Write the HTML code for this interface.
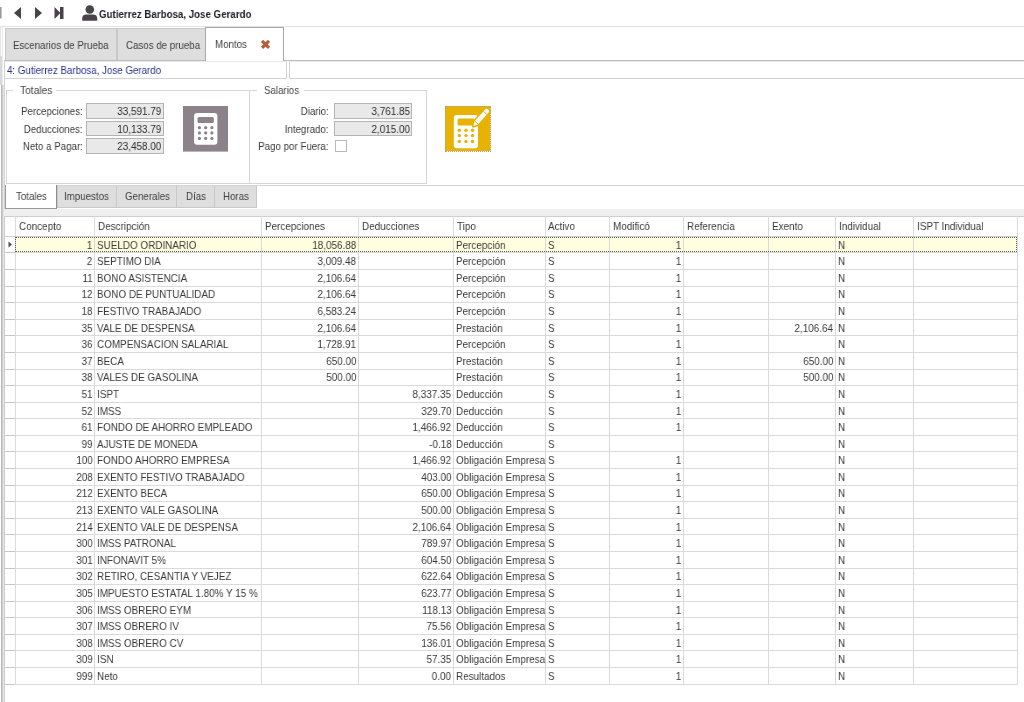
<!DOCTYPE html><html><head><meta charset="utf-8"><title>Montos</title><style>
*{margin:0;padding:0;box-sizing:border-box}
html,body{width:1024px;height:702px;overflow:hidden;background:#fff}
body{position:relative;font-family:"Liberation Sans",sans-serif;font-size:11px;color:#3a3a3a}
.a{position:absolute}
.t{position:absolute;white-space:nowrap;line-height:1;will-change:transform}
.hl{position:absolute;height:1px}
.vl{position:absolute;width:1px}
.g{color:#3b3b3b}
</style></head><body>
<svg class="a" style="left:0;top:0" width="80" height="26" viewBox="0 0 80 26">
<rect x="0" y="7" width="1.6" height="11.5" fill="#9a9a9a"/>
<polygon points="21,7 21,19 14,13" fill="#48434a"/>
<polygon points="35,7 35,19 42,13" fill="#48434a"/>
<polygon points="54.5,7 54.5,19 60.5,13" fill="#48434a"/>
<rect x="60" y="7" width="3.5" height="12" fill="#48434a"/>
<circle cx="89.8" cy="9.6" r="4.3" fill="#48434a"/>
</svg>
<svg class="a" style="left:80px;top:0" width="20" height="26" viewBox="80 0 20 26">
<circle cx="89.8" cy="9.5" r="4.3" fill="#48434a"/>
<path d="M82.2 20.8 L82.2 18.5 Q82.2 14.6 86.5 14.6 L93 14.6 Q97.2 14.6 97.2 18.5 L97.2 20.8 Z" fill="#48434a"/>
</svg>
<div class="t" style="left:99.30px;top:8.69px;font-size:11px;transform:scaleX(0.884);transform-origin:0 0;font-weight:bold;color:#1e1e2a">Gutierrez Barbosa, Jose Gerardo</div>
<div class="hl" style="left:0px;top:25.5px;width:1024px;height:1px;background:#e2e2e2"></div>
<div class="vl" style="left:0px;top:26px;height:30px;width:1px;background:#e4e4e4"></div>
<div class="vl" style="left:2px;top:26px;height:30px;width:1px;background:#e6e6e6"></div>
<div class="vl" style="left:0px;top:56px;height:29px;width:1px;background:#d8d8d8"></div>
<div class="vl" style="left:1px;top:56px;height:29px;width:1px;background:#dadada"></div>
<div class="vl" style="left:2px;top:56px;height:29px;width:1px;background:#ececec"></div>
<div class="vl" style="left:1px;top:85px;height:617px;width:1px;background:#b9b9b9"></div>
<div class="vl" style="left:2px;top:85px;height:617px;width:1px;background:#cdcdcd"></div>
<div class="vl" style="left:3px;top:85px;height:617px;width:1px;background:#e4e4e4"></div>
<div class="hl" style="left:4px;top:59.5px;width:1020px;height:1px;background:#bdbdbd"></div>
<div class="a" style="left:5px;top:28px;width:112px;height:32px;background:#dedede;border:1px solid #c8c8c8;border-bottom:none;"></div>
<div class="t" style="left:13.00px;top:39.79px;font-size:11px;transform:scaleX(0.884);transform-origin:0 0;color:#404040">Escenarios de Prueba</div>
<div class="a" style="left:117px;top:28px;width:89px;height:32px;background:#dedede;border:1px solid #c8c8c8;border-bottom:none;"></div>
<div class="t" style="left:125.50px;top:39.79px;font-size:11px;transform:scaleX(0.884);transform-origin:0 0;color:#404040">Casos de prueba</div>
<div class="a" style="left:205px;top:26.5px;width:79px;height:34px;background:#fff;border:1px solid #a9a9a9;border-bottom:none;"></div>
<div class="t" style="left:215.40px;top:38.89px;font-size:11px;transform:scaleX(0.884);transform-origin:0 0;color:#404040">Montos</div>
<svg class="a" style="left:260px;top:39px" width="12" height="11" viewBox="0 0 12 11">
<path d="M2 1.9 L9 8.9 M9 1.9 L2 8.9" stroke="#b95c3b" stroke-width="3.1" stroke-linecap="butt"/></svg>
<div class="a" style="left:4px;top:61px;width:283px;height:18px;background:#fff;border:1px solid #d2d2d2;border-top-color:#e8e8e8"></div>
<div class="t" style="left:7.00px;top:64.69px;font-size:11px;transform:scaleX(0.884);transform-origin:0 0;color:#283190">4: Gutierrez Barbosa, Jose Gerardo</div>
<div class="a" style="left:288.5px;top:61px;width:740px;height:18px;background:#fff;border:1px solid #d2d2d2;border-top-color:#e8e8e8;border-right:none"></div>
<div class="vl" style="left:4px;top:79px;height:623px;width:1px;background:#d4d4d4"></div>
<div class="hl" style="left:6px;top:90px;width:7px;height:1px;background:#d6d6d6"></div>
<div class="hl" style="left:56px;top:90px;width:193px;height:1px;background:#d6d6d6"></div>
<div class="vl" style="left:6px;top:90px;height:93px;width:1px;background:#d6d6d6"></div>
<div class="vl" style="left:249px;top:90px;height:94px;width:1px;background:#d6d6d6"></div>
<div class="hl" style="left:6px;top:183px;width:244px;height:1px;background:#d6d6d6"></div>
<div class="t" style="left:20.00px;top:84.89px;font-size:11px;transform:scaleX(0.93);transform-origin:0 0;color:#454545">Totales</div>
<div class="hl" style="left:249px;top:90px;width:8px;height:1px;background:#d6d6d6"></div>
<div class="hl" style="left:304px;top:90px;width:123px;height:1px;background:#d6d6d6"></div>
<div class="vl" style="left:426px;top:90px;height:94px;width:1px;background:#d6d6d6"></div>
<div class="hl" style="left:250px;top:183px;width:177px;height:1px;background:#d6d6d6"></div>
<div class="t" style="left:263.80px;top:84.89px;font-size:11px;transform:scaleX(0.884);transform-origin:0 0;color:#454545">Salarios</div>
<div class="t" style="right:941.40px;top:105.79px;font-size:11px;transform:scaleX(0.884);transform-origin:100% 0;color:#3a3a3a">Percepciones:</div>
<div class="t" style="right:941.40px;top:123.59px;font-size:11px;transform:scaleX(0.884);transform-origin:100% 0;color:#3a3a3a">Deducciones:</div>
<div class="t" style="right:941.40px;top:140.89px;font-size:11px;transform:scaleX(0.884);transform-origin:100% 0;color:#3a3a3a">Neto a Pagar:</div>
<div class="a" style="left:86px;top:103.3px;width:78px;height:15.4px;background:#e9e9e9;border:1px solid #b4b4b4;"></div>
<div class="t" style="right:862.50px;top:106.33px;font-size:11.3px;transform:scaleX(0.8761061946902655);transform-origin:100% 0;color:#2e2e2e">33,591.79</div>
<div class="a" style="left:86px;top:121px;width:78px;height:15.4px;background:#e9e9e9;border:1px solid #b4b4b4;"></div>
<div class="t" style="right:862.50px;top:124.03px;font-size:11.3px;transform:scaleX(0.8761061946902655);transform-origin:100% 0;color:#2e2e2e">10,133.79</div>
<div class="a" style="left:86px;top:138.4px;width:78px;height:15.4px;background:#e9e9e9;border:1px solid #b4b4b4;"></div>
<div class="t" style="right:862.50px;top:141.43px;font-size:11.3px;transform:scaleX(0.8761061946902655);transform-origin:100% 0;color:#2e2e2e">23,458.00</div>
<div class="t" style="right:695.70px;top:105.99px;font-size:11px;transform:scaleX(0.884);transform-origin:100% 0;color:#3a3a3a">Diario:</div>
<div class="t" style="right:695.70px;top:123.59px;font-size:11px;transform:scaleX(0.884);transform-origin:100% 0;color:#3a3a3a">Integrado:</div>
<div class="t" style="right:695.70px;top:141.19px;font-size:11px;transform:scaleX(0.884);transform-origin:100% 0;color:#3a3a3a">Pago por Fuera:</div>
<div class="a" style="left:333.8px;top:103.2px;width:78.2px;height:15.6px;background:#e9e9e9;border:1px solid #b4b4b4;"></div>
<div class="t" style="right:614.50px;top:106.23px;font-size:11.3px;transform:scaleX(0.8761061946902655);transform-origin:100% 0;color:#2e2e2e">3,761.85</div>
<div class="a" style="left:333.8px;top:121px;width:78.2px;height:15.4px;background:#e9e9e9;border:1px solid #b4b4b4;"></div>
<div class="t" style="right:614.50px;top:124.03px;font-size:11.3px;transform:scaleX(0.8761061946902655);transform-origin:100% 0;color:#2e2e2e">2,015.00</div>
<div class="a" style="left:334.7px;top:140.2px;width:12px;height:12px;background:#fff;border:1px solid #b8b8b8;"></div>
<svg class="a" style="left:182.8px;top:106px" width="45.5" height="45.6" viewBox="0 0 45.5 45.6">
<rect x="0" y="0" width="45.5" height="45.6" fill="#8c828a"/>
<rect x="11.1" y="6.9" width="23.3" height="31.8" rx="3" fill="#fff"/>
<rect x="14.5" y="11" width="16.3" height="5.9" rx="1.5" fill="#8c828a"/>
<g fill="#8c828a">
<circle cx="16.4" cy="21.7" r="1.6"/><circle cx="22.7" cy="21.7" r="1.6"/><circle cx="28.9" cy="21.7" r="1.6"/>
<circle cx="16.4" cy="26.9" r="1.6"/><circle cx="22.7" cy="26.9" r="1.6"/><circle cx="28.9" cy="26.9" r="1.6"/>
<circle cx="16.4" cy="32.4" r="1.6"/><circle cx="22.7" cy="32.4" r="1.6"/><circle cx="28.9" cy="32.4" r="1.6"/>
</g></svg>
<svg class="a" style="left:445.3px;top:106.2px" width="45.6" height="45.2" viewBox="0 0 45.6 45.2">
<rect x="0" y="0" width="45.6" height="45.2" fill="#e8b200"/>
<rect x="8.8" y="8.9" width="24.2" height="33.3" rx="3" fill="#fff"/>
<rect x="12.5" y="12.6" width="17" height="6.8" rx="1.5" fill="#e8b200"/>
<g fill="#e8b200">
<circle cx="14.3" cy="24.2" r="1.7"/><circle cx="21" cy="24.2" r="1.7"/><circle cx="27.5" cy="24.2" r="1.7"/>
<circle cx="14.3" cy="29.6" r="1.7"/><circle cx="21" cy="29.6" r="1.7"/><circle cx="27.5" cy="29.6" r="1.7"/>
<circle cx="14.3" cy="35.4" r="1.7"/><circle cx="21" cy="35.4" r="1.7"/><circle cx="27.5" cy="35.4" r="1.7"/>
</g>
<g transform="translate(28.4 20) rotate(-48)">
<path d="M0 0 L4 -2.3 L20 -2.3 Q22.2 -2.3 22.2 0 Q22.2 2.3 20 2.3 L4 2.3 Z" fill="#e8b200" stroke="#e8b200" stroke-width="3.2" stroke-linejoin="round"/>
<path d="M0 0 L4 -2.3 L20 -2.3 Q22.2 -2.3 22.2 0 Q22.2 2.3 20 2.3 L4 2.3 Z" fill="#fff"/>
<path d="M4.6 -2.6 L4.6 2.6 M17.6 -2.6 L17.6 2.6" stroke="#e8b200" stroke-width="0.9"/>
</g>
</svg>
<div class="a" style="left:445px;top:106px;width:46px;height:45.6px;border:1px dotted #a4a4a4"></div>
<div class="hl" style="left:4px;top:184.8px;width:1020px;height:1px;background:#d4d4d4"></div>
<div class="a" style="left:4px;top:209px;width:1020px;height:6.5px;background:#efefef;"></div>
<div class="a" style="left:57px;top:186px;width:60px;height:22px;background:#dedede;border:1px solid #c8c8c8;border-top:none"></div>
<div class="t" style="left:64.00px;top:190.59px;font-size:11px;transform:scaleX(0.884);transform-origin:0 0;color:#404040">Impuestos</div>
<div class="a" style="left:116px;top:186px;width:61px;height:22px;background:#dedede;border:1px solid #c8c8c8;border-top:none"></div>
<div class="t" style="left:124.80px;top:190.59px;font-size:11px;transform:scaleX(0.884);transform-origin:0 0;color:#404040">Generales</div>
<div class="a" style="left:176px;top:186px;width:39px;height:22px;background:#dedede;border:1px solid #c8c8c8;border-top:none"></div>
<div class="t" style="left:185.80px;top:190.59px;font-size:11px;transform:scaleX(0.884);transform-origin:0 0;color:#404040">Días</div>
<div class="a" style="left:214px;top:186px;width:43px;height:22px;background:#dedede;border:1px solid #c8c8c8;border-top:none"></div>
<div class="t" style="left:223.20px;top:190.59px;font-size:11px;transform:scaleX(0.884);transform-origin:0 0;color:#404040">Horas</div>
<div class="a" style="left:5px;top:185.3px;width:52px;height:23.7px;background:#fff;border:1px solid #9a9a9a;border-top:none;border-right:none"></div>
<div class="t" style="left:15.70px;top:191.29px;font-size:11px;transform:scaleX(0.884);transform-origin:0 0;color:#404040">Totales</div>
<div class="vl" style="left:56px;top:185.3px;height:23.7px;width:1px;background:#8e8e8e"></div>
<div class="a" style="left:4px;top:216px;width:1014px;height:19.4px;background:#fff;"></div>
<div class="a" style="left:15.5px;top:236.43px;width:1001.5px;height:15.984px;background:#ffffe0;"></div>
<div class="hl" style="left:4px;top:216px;width:1020px;height:1px;background:#cfcfcf"></div>
<div class="vl" style="left:4px;top:216px;height:468.59799999999996px;width:1px;background:#cfcfcf"></div>
<div class="vl" style="left:15px;top:216px;height:468.59799999999996px;width:1px;background:#dadada"></div>
<div class="vl" style="left:94px;top:216px;height:468.59799999999996px;width:1px;background:#dadada"></div>
<div class="vl" style="left:261px;top:216px;height:468.59799999999996px;width:1px;background:#dadada"></div>
<div class="vl" style="left:358px;top:216px;height:468.59799999999996px;width:1px;background:#dadada"></div>
<div class="vl" style="left:453px;top:216px;height:468.59799999999996px;width:1px;background:#dadada"></div>
<div class="vl" style="left:545px;top:216px;height:468.59799999999996px;width:1px;background:#dadada"></div>
<div class="vl" style="left:609px;top:216px;height:468.59799999999996px;width:1px;background:#dadada"></div>
<div class="vl" style="left:683px;top:216px;height:468.59799999999996px;width:1px;background:#dadada"></div>
<div class="vl" style="left:768px;top:216px;height:468.59799999999996px;width:1px;background:#dadada"></div>
<div class="vl" style="left:835px;top:216px;height:468.59799999999996px;width:1px;background:#dadada"></div>
<div class="vl" style="left:913px;top:216px;height:468.59799999999996px;width:1px;background:#dadada"></div>
<div class="vl" style="left:1017px;top:216px;height:468.59799999999996px;width:1px;background:#dadada"></div>
<div class="hl" style="left:4px;top:235.83px;width:1014px;height:1px;background:#cfcfcf"></div>
<div class="t" style="left:18.80px;top:221.03px;font-size:11.3px;transform:scaleX(0.8761061946902655);transform-origin:0 0;">Concepto</div>
<div class="t" style="left:98.00px;top:221.03px;font-size:11.3px;transform:scaleX(0.8761061946902655);transform-origin:0 0;">Descripción</div>
<div class="t" style="left:265.00px;top:221.03px;font-size:11.3px;transform:scaleX(0.8761061946902655);transform-origin:0 0;">Percepciones</div>
<div class="t" style="left:361.70px;top:221.03px;font-size:11.3px;transform:scaleX(0.8761061946902655);transform-origin:0 0;">Deducciones</div>
<div class="t" style="left:457.20px;top:221.03px;font-size:11.3px;transform:scaleX(0.8761061946902655);transform-origin:0 0;">Tipo</div>
<div class="t" style="left:548.40px;top:221.03px;font-size:11.3px;transform:scaleX(0.8761061946902655);transform-origin:0 0;">Activo</div>
<div class="t" style="left:613.00px;top:221.03px;font-size:11.3px;transform:scaleX(0.8761061946902655);transform-origin:0 0;">Modificó</div>
<div class="t" style="left:687.00px;top:221.03px;font-size:11.3px;transform:scaleX(0.8761061946902655);transform-origin:0 0;">Referencia</div>
<div class="t" style="left:771.60px;top:221.03px;font-size:11.3px;transform:scaleX(0.8761061946902655);transform-origin:0 0;">Exento</div>
<div class="t" style="left:839.00px;top:221.03px;font-size:11.3px;transform:scaleX(0.8761061946902655);transform-origin:0 0;">Individual</div>
<div class="t" style="left:917.40px;top:221.03px;font-size:11.3px;transform:scaleX(0.8761061946902655);transform-origin:0 0;">ISPT Individual</div>
<svg class="a" style="left:8px;top:241.33px" width="5" height="7" viewBox="0 0 5 7"><polygon points="0.5,0.5 4,3.5 0.5,6.5" fill="#505050"/></svg>
<div class="hl" style="left:4px;top:252.41400000000002px;width:1014px;height:1px;background:#dadada"></div>
<div class="hl" style="left:4px;top:252.41400000000002px;width:11px;height:1px;background:#c6c6c6"></div>
<div class="t" style="right:931.60px;top:239.66px;font-size:11.3px;transform:scaleX(0.8761061946902655);transform-origin:100% 0;">1</div>
<div class="t" style="left:97.40px;top:239.66px;font-size:11.3px;transform:scaleX(0.8761061946902655);transform-origin:0 0;">SUELDO ORDINARIO</div>
<div class="t" style="right:667.60px;top:239.66px;font-size:11.3px;transform:scaleX(0.8761061946902655);transform-origin:100% 0;">18,056.88</div>
<div class="t" style="left:456.40px;top:239.66px;font-size:11.3px;transform:scaleX(0.8761061946902655);transform-origin:0 0;">Percepción</div>
<div class="t" style="left:548.40px;top:239.66px;font-size:11.3px;transform:scaleX(0.8761061946902655);transform-origin:0 0;">S</div>
<div class="t" style="right:342.60px;top:239.66px;font-size:11.3px;transform:scaleX(0.8761061946902655);transform-origin:100% 0;">1</div>
<div class="t" style="left:838.40px;top:239.66px;font-size:11.3px;transform:scaleX(0.8761061946902655);transform-origin:0 0;">N</div>
<div class="hl" style="left:4px;top:268.998px;width:1014px;height:1px;background:#dadada"></div>
<div class="hl" style="left:4px;top:268.998px;width:11px;height:1px;background:#c6c6c6"></div>
<div class="t" style="right:931.60px;top:256.25px;font-size:11.3px;transform:scaleX(0.8761061946902655);transform-origin:100% 0;">2</div>
<div class="t" style="left:97.40px;top:256.25px;font-size:11.3px;transform:scaleX(0.8761061946902655);transform-origin:0 0;">SEPTIMO DIA</div>
<div class="t" style="right:667.60px;top:256.25px;font-size:11.3px;transform:scaleX(0.8761061946902655);transform-origin:100% 0;">3,009.48</div>
<div class="t" style="left:456.40px;top:256.25px;font-size:11.3px;transform:scaleX(0.8761061946902655);transform-origin:0 0;">Percepción</div>
<div class="t" style="left:548.40px;top:256.25px;font-size:11.3px;transform:scaleX(0.8761061946902655);transform-origin:0 0;">S</div>
<div class="t" style="right:342.60px;top:256.25px;font-size:11.3px;transform:scaleX(0.8761061946902655);transform-origin:100% 0;">1</div>
<div class="t" style="left:838.40px;top:256.25px;font-size:11.3px;transform:scaleX(0.8761061946902655);transform-origin:0 0;">N</div>
<div class="hl" style="left:4px;top:285.582px;width:1014px;height:1px;background:#dadada"></div>
<div class="hl" style="left:4px;top:285.582px;width:11px;height:1px;background:#c6c6c6"></div>
<div class="t" style="right:931.60px;top:272.83px;font-size:11.3px;transform:scaleX(0.8761061946902655);transform-origin:100% 0;">11</div>
<div class="t" style="left:97.40px;top:272.83px;font-size:11.3px;transform:scaleX(0.8761061946902655);transform-origin:0 0;">BONO ASISTENCIA</div>
<div class="t" style="right:667.60px;top:272.83px;font-size:11.3px;transform:scaleX(0.8761061946902655);transform-origin:100% 0;">2,106.64</div>
<div class="t" style="left:456.40px;top:272.83px;font-size:11.3px;transform:scaleX(0.8761061946902655);transform-origin:0 0;">Percepción</div>
<div class="t" style="left:548.40px;top:272.83px;font-size:11.3px;transform:scaleX(0.8761061946902655);transform-origin:0 0;">S</div>
<div class="t" style="right:342.60px;top:272.83px;font-size:11.3px;transform:scaleX(0.8761061946902655);transform-origin:100% 0;">1</div>
<div class="t" style="left:838.40px;top:272.83px;font-size:11.3px;transform:scaleX(0.8761061946902655);transform-origin:0 0;">N</div>
<div class="hl" style="left:4px;top:302.166px;width:1014px;height:1px;background:#dadada"></div>
<div class="hl" style="left:4px;top:302.166px;width:11px;height:1px;background:#c6c6c6"></div>
<div class="t" style="right:931.60px;top:289.42px;font-size:11.3px;transform:scaleX(0.8761061946902655);transform-origin:100% 0;">12</div>
<div class="t" style="left:97.40px;top:289.42px;font-size:11.3px;transform:scaleX(0.8761061946902655);transform-origin:0 0;">BONO DE PUNTUALIDAD</div>
<div class="t" style="right:667.60px;top:289.42px;font-size:11.3px;transform:scaleX(0.8761061946902655);transform-origin:100% 0;">2,106.64</div>
<div class="t" style="left:456.40px;top:289.42px;font-size:11.3px;transform:scaleX(0.8761061946902655);transform-origin:0 0;">Percepción</div>
<div class="t" style="left:548.40px;top:289.42px;font-size:11.3px;transform:scaleX(0.8761061946902655);transform-origin:0 0;">S</div>
<div class="t" style="right:342.60px;top:289.42px;font-size:11.3px;transform:scaleX(0.8761061946902655);transform-origin:100% 0;">1</div>
<div class="t" style="left:838.40px;top:289.42px;font-size:11.3px;transform:scaleX(0.8761061946902655);transform-origin:0 0;">N</div>
<div class="hl" style="left:4px;top:318.75px;width:1014px;height:1px;background:#dadada"></div>
<div class="hl" style="left:4px;top:318.75px;width:11px;height:1px;background:#c6c6c6"></div>
<div class="t" style="right:931.60px;top:306.00px;font-size:11.3px;transform:scaleX(0.8761061946902655);transform-origin:100% 0;">18</div>
<div class="t" style="left:97.40px;top:306.00px;font-size:11.3px;transform:scaleX(0.8761061946902655);transform-origin:0 0;">FESTIVO TRABAJADO</div>
<div class="t" style="right:667.60px;top:306.00px;font-size:11.3px;transform:scaleX(0.8761061946902655);transform-origin:100% 0;">6,583.24</div>
<div class="t" style="left:456.40px;top:306.00px;font-size:11.3px;transform:scaleX(0.8761061946902655);transform-origin:0 0;">Percepción</div>
<div class="t" style="left:548.40px;top:306.00px;font-size:11.3px;transform:scaleX(0.8761061946902655);transform-origin:0 0;">S</div>
<div class="t" style="right:342.60px;top:306.00px;font-size:11.3px;transform:scaleX(0.8761061946902655);transform-origin:100% 0;">1</div>
<div class="t" style="left:838.40px;top:306.00px;font-size:11.3px;transform:scaleX(0.8761061946902655);transform-origin:0 0;">N</div>
<div class="hl" style="left:4px;top:335.334px;width:1014px;height:1px;background:#dadada"></div>
<div class="hl" style="left:4px;top:335.334px;width:11px;height:1px;background:#c6c6c6"></div>
<div class="t" style="right:931.60px;top:322.58px;font-size:11.3px;transform:scaleX(0.8761061946902655);transform-origin:100% 0;">35</div>
<div class="t" style="left:97.40px;top:322.58px;font-size:11.3px;transform:scaleX(0.8761061946902655);transform-origin:0 0;">VALE DE DESPENSA</div>
<div class="t" style="right:667.60px;top:322.58px;font-size:11.3px;transform:scaleX(0.8761061946902655);transform-origin:100% 0;">2,106.64</div>
<div class="t" style="left:456.40px;top:322.58px;font-size:11.3px;transform:scaleX(0.8761061946902655);transform-origin:0 0;">Prestación</div>
<div class="t" style="left:548.40px;top:322.58px;font-size:11.3px;transform:scaleX(0.8761061946902655);transform-origin:0 0;">S</div>
<div class="t" style="right:342.60px;top:322.58px;font-size:11.3px;transform:scaleX(0.8761061946902655);transform-origin:100% 0;">1</div>
<div class="t" style="right:190.60px;top:322.58px;font-size:11.3px;transform:scaleX(0.8761061946902655);transform-origin:100% 0;">2,106.64</div>
<div class="t" style="left:838.40px;top:322.58px;font-size:11.3px;transform:scaleX(0.8761061946902655);transform-origin:0 0;">N</div>
<div class="hl" style="left:4px;top:351.918px;width:1014px;height:1px;background:#dadada"></div>
<div class="hl" style="left:4px;top:351.918px;width:11px;height:1px;background:#c6c6c6"></div>
<div class="t" style="right:931.60px;top:339.17px;font-size:11.3px;transform:scaleX(0.8761061946902655);transform-origin:100% 0;">36</div>
<div class="t" style="left:97.40px;top:339.17px;font-size:11.3px;transform:scaleX(0.8761061946902655);transform-origin:0 0;">COMPENSACION SALARIAL</div>
<div class="t" style="right:667.60px;top:339.17px;font-size:11.3px;transform:scaleX(0.8761061946902655);transform-origin:100% 0;">1,728.91</div>
<div class="t" style="left:456.40px;top:339.17px;font-size:11.3px;transform:scaleX(0.8761061946902655);transform-origin:0 0;">Percepción</div>
<div class="t" style="left:548.40px;top:339.17px;font-size:11.3px;transform:scaleX(0.8761061946902655);transform-origin:0 0;">S</div>
<div class="t" style="right:342.60px;top:339.17px;font-size:11.3px;transform:scaleX(0.8761061946902655);transform-origin:100% 0;">1</div>
<div class="t" style="left:838.40px;top:339.17px;font-size:11.3px;transform:scaleX(0.8761061946902655);transform-origin:0 0;">N</div>
<div class="hl" style="left:4px;top:368.502px;width:1014px;height:1px;background:#dadada"></div>
<div class="hl" style="left:4px;top:368.502px;width:11px;height:1px;background:#c6c6c6"></div>
<div class="t" style="right:931.60px;top:355.75px;font-size:11.3px;transform:scaleX(0.8761061946902655);transform-origin:100% 0;">37</div>
<div class="t" style="left:97.40px;top:355.75px;font-size:11.3px;transform:scaleX(0.8761061946902655);transform-origin:0 0;">BECA</div>
<div class="t" style="right:667.60px;top:355.75px;font-size:11.3px;transform:scaleX(0.8761061946902655);transform-origin:100% 0;">650.00</div>
<div class="t" style="left:456.40px;top:355.75px;font-size:11.3px;transform:scaleX(0.8761061946902655);transform-origin:0 0;">Prestación</div>
<div class="t" style="left:548.40px;top:355.75px;font-size:11.3px;transform:scaleX(0.8761061946902655);transform-origin:0 0;">S</div>
<div class="t" style="right:342.60px;top:355.75px;font-size:11.3px;transform:scaleX(0.8761061946902655);transform-origin:100% 0;">1</div>
<div class="t" style="right:190.60px;top:355.75px;font-size:11.3px;transform:scaleX(0.8761061946902655);transform-origin:100% 0;">650.00</div>
<div class="t" style="left:838.40px;top:355.75px;font-size:11.3px;transform:scaleX(0.8761061946902655);transform-origin:0 0;">N</div>
<div class="hl" style="left:4px;top:385.086px;width:1014px;height:1px;background:#dadada"></div>
<div class="hl" style="left:4px;top:385.086px;width:11px;height:1px;background:#c6c6c6"></div>
<div class="t" style="right:931.60px;top:372.34px;font-size:11.3px;transform:scaleX(0.8761061946902655);transform-origin:100% 0;">38</div>
<div class="t" style="left:97.40px;top:372.34px;font-size:11.3px;transform:scaleX(0.8761061946902655);transform-origin:0 0;">VALES DE GASOLINA</div>
<div class="t" style="right:667.60px;top:372.34px;font-size:11.3px;transform:scaleX(0.8761061946902655);transform-origin:100% 0;">500.00</div>
<div class="t" style="left:456.40px;top:372.34px;font-size:11.3px;transform:scaleX(0.8761061946902655);transform-origin:0 0;">Prestación</div>
<div class="t" style="left:548.40px;top:372.34px;font-size:11.3px;transform:scaleX(0.8761061946902655);transform-origin:0 0;">S</div>
<div class="t" style="right:342.60px;top:372.34px;font-size:11.3px;transform:scaleX(0.8761061946902655);transform-origin:100% 0;">1</div>
<div class="t" style="right:190.60px;top:372.34px;font-size:11.3px;transform:scaleX(0.8761061946902655);transform-origin:100% 0;">500.00</div>
<div class="t" style="left:838.40px;top:372.34px;font-size:11.3px;transform:scaleX(0.8761061946902655);transform-origin:0 0;">N</div>
<div class="hl" style="left:4px;top:401.67px;width:1014px;height:1px;background:#dadada"></div>
<div class="hl" style="left:4px;top:401.67px;width:11px;height:1px;background:#c6c6c6"></div>
<div class="t" style="right:931.60px;top:388.92px;font-size:11.3px;transform:scaleX(0.8761061946902655);transform-origin:100% 0;">51</div>
<div class="t" style="left:97.40px;top:388.92px;font-size:11.3px;transform:scaleX(0.8761061946902655);transform-origin:0 0;">ISPT</div>
<div class="t" style="right:572.60px;top:388.92px;font-size:11.3px;transform:scaleX(0.8761061946902655);transform-origin:100% 0;">8,337.35</div>
<div class="t" style="left:456.40px;top:388.92px;font-size:11.3px;transform:scaleX(0.8761061946902655);transform-origin:0 0;">Deducción</div>
<div class="t" style="left:548.40px;top:388.92px;font-size:11.3px;transform:scaleX(0.8761061946902655);transform-origin:0 0;">S</div>
<div class="t" style="right:342.60px;top:388.92px;font-size:11.3px;transform:scaleX(0.8761061946902655);transform-origin:100% 0;">1</div>
<div class="t" style="left:838.40px;top:388.92px;font-size:11.3px;transform:scaleX(0.8761061946902655);transform-origin:0 0;">N</div>
<div class="hl" style="left:4px;top:418.254px;width:1014px;height:1px;background:#dadada"></div>
<div class="hl" style="left:4px;top:418.254px;width:11px;height:1px;background:#c6c6c6"></div>
<div class="t" style="right:931.60px;top:405.50px;font-size:11.3px;transform:scaleX(0.8761061946902655);transform-origin:100% 0;">52</div>
<div class="t" style="left:97.40px;top:405.50px;font-size:11.3px;transform:scaleX(0.8761061946902655);transform-origin:0 0;">IMSS</div>
<div class="t" style="right:572.60px;top:405.50px;font-size:11.3px;transform:scaleX(0.8761061946902655);transform-origin:100% 0;">329.70</div>
<div class="t" style="left:456.40px;top:405.50px;font-size:11.3px;transform:scaleX(0.8761061946902655);transform-origin:0 0;">Deducción</div>
<div class="t" style="left:548.40px;top:405.50px;font-size:11.3px;transform:scaleX(0.8761061946902655);transform-origin:0 0;">S</div>
<div class="t" style="right:342.60px;top:405.50px;font-size:11.3px;transform:scaleX(0.8761061946902655);transform-origin:100% 0;">1</div>
<div class="t" style="left:838.40px;top:405.50px;font-size:11.3px;transform:scaleX(0.8761061946902655);transform-origin:0 0;">N</div>
<div class="hl" style="left:4px;top:434.838px;width:1014px;height:1px;background:#dadada"></div>
<div class="hl" style="left:4px;top:434.838px;width:11px;height:1px;background:#c6c6c6"></div>
<div class="t" style="right:931.60px;top:422.09px;font-size:11.3px;transform:scaleX(0.8761061946902655);transform-origin:100% 0;">61</div>
<div class="t" style="left:97.40px;top:422.09px;font-size:11.3px;transform:scaleX(0.8761061946902655);transform-origin:0 0;">FONDO DE AHORRO EMPLEADO</div>
<div class="t" style="right:572.60px;top:422.09px;font-size:11.3px;transform:scaleX(0.8761061946902655);transform-origin:100% 0;">1,466.92</div>
<div class="t" style="left:456.40px;top:422.09px;font-size:11.3px;transform:scaleX(0.8761061946902655);transform-origin:0 0;">Deducción</div>
<div class="t" style="left:548.40px;top:422.09px;font-size:11.3px;transform:scaleX(0.8761061946902655);transform-origin:0 0;">S</div>
<div class="t" style="right:342.60px;top:422.09px;font-size:11.3px;transform:scaleX(0.8761061946902655);transform-origin:100% 0;">1</div>
<div class="t" style="left:838.40px;top:422.09px;font-size:11.3px;transform:scaleX(0.8761061946902655);transform-origin:0 0;">N</div>
<div class="hl" style="left:4px;top:451.42199999999997px;width:1014px;height:1px;background:#dadada"></div>
<div class="hl" style="left:4px;top:451.42199999999997px;width:11px;height:1px;background:#c6c6c6"></div>
<div class="t" style="right:931.60px;top:438.67px;font-size:11.3px;transform:scaleX(0.8761061946902655);transform-origin:100% 0;">99</div>
<div class="t" style="left:97.40px;top:438.67px;font-size:11.3px;transform:scaleX(0.8761061946902655);transform-origin:0 0;">AJUSTE DE MONEDA</div>
<div class="t" style="right:572.60px;top:438.67px;font-size:11.3px;transform:scaleX(0.8761061946902655);transform-origin:100% 0;">-0.18</div>
<div class="t" style="left:456.40px;top:438.67px;font-size:11.3px;transform:scaleX(0.8761061946902655);transform-origin:0 0;">Deducción</div>
<div class="t" style="left:548.40px;top:438.67px;font-size:11.3px;transform:scaleX(0.8761061946902655);transform-origin:0 0;">S</div>
<div class="t" style="left:838.40px;top:438.67px;font-size:11.3px;transform:scaleX(0.8761061946902655);transform-origin:0 0;">N</div>
<div class="hl" style="left:4px;top:468.00600000000003px;width:1014px;height:1px;background:#dadada"></div>
<div class="hl" style="left:4px;top:468.00600000000003px;width:11px;height:1px;background:#c6c6c6"></div>
<div class="t" style="right:931.60px;top:455.26px;font-size:11.3px;transform:scaleX(0.8761061946902655);transform-origin:100% 0;">100</div>
<div class="t" style="left:97.40px;top:455.26px;font-size:11.3px;transform:scaleX(0.8761061946902655);transform-origin:0 0;">FONDO AHORRO EMPRESA</div>
<div class="t" style="right:572.60px;top:455.26px;font-size:11.3px;transform:scaleX(0.8761061946902655);transform-origin:100% 0;">1,466.92</div>
<div class="t" style="left:456.40px;top:455.26px;font-size:11.3px;transform:scaleX(0.8761061946902655);transform-origin:0 0;">Obligación Empresa</div>
<div class="t" style="left:548.40px;top:455.26px;font-size:11.3px;transform:scaleX(0.8761061946902655);transform-origin:0 0;">S</div>
<div class="t" style="right:342.60px;top:455.26px;font-size:11.3px;transform:scaleX(0.8761061946902655);transform-origin:100% 0;">1</div>
<div class="t" style="left:838.40px;top:455.26px;font-size:11.3px;transform:scaleX(0.8761061946902655);transform-origin:0 0;">N</div>
<div class="hl" style="left:4px;top:484.59px;width:1014px;height:1px;background:#dadada"></div>
<div class="hl" style="left:4px;top:484.59px;width:11px;height:1px;background:#c6c6c6"></div>
<div class="t" style="right:931.60px;top:471.84px;font-size:11.3px;transform:scaleX(0.8761061946902655);transform-origin:100% 0;">208</div>
<div class="t" style="left:97.40px;top:471.84px;font-size:11.3px;transform:scaleX(0.8761061946902655);transform-origin:0 0;">EXENTO FESTIVO TRABAJADO</div>
<div class="t" style="right:572.60px;top:471.84px;font-size:11.3px;transform:scaleX(0.8761061946902655);transform-origin:100% 0;">403.00</div>
<div class="t" style="left:456.40px;top:471.84px;font-size:11.3px;transform:scaleX(0.8761061946902655);transform-origin:0 0;">Obligación Empresa</div>
<div class="t" style="left:548.40px;top:471.84px;font-size:11.3px;transform:scaleX(0.8761061946902655);transform-origin:0 0;">S</div>
<div class="t" style="right:342.60px;top:471.84px;font-size:11.3px;transform:scaleX(0.8761061946902655);transform-origin:100% 0;">1</div>
<div class="t" style="left:838.40px;top:471.84px;font-size:11.3px;transform:scaleX(0.8761061946902655);transform-origin:0 0;">N</div>
<div class="hl" style="left:4px;top:501.17400000000004px;width:1014px;height:1px;background:#dadada"></div>
<div class="hl" style="left:4px;top:501.17400000000004px;width:11px;height:1px;background:#c6c6c6"></div>
<div class="t" style="right:931.60px;top:488.42px;font-size:11.3px;transform:scaleX(0.8761061946902655);transform-origin:100% 0;">212</div>
<div class="t" style="left:97.40px;top:488.42px;font-size:11.3px;transform:scaleX(0.8761061946902655);transform-origin:0 0;">EXENTO BECA</div>
<div class="t" style="right:572.60px;top:488.42px;font-size:11.3px;transform:scaleX(0.8761061946902655);transform-origin:100% 0;">650.00</div>
<div class="t" style="left:456.40px;top:488.42px;font-size:11.3px;transform:scaleX(0.8761061946902655);transform-origin:0 0;">Obligación Empresa</div>
<div class="t" style="left:548.40px;top:488.42px;font-size:11.3px;transform:scaleX(0.8761061946902655);transform-origin:0 0;">S</div>
<div class="t" style="right:342.60px;top:488.42px;font-size:11.3px;transform:scaleX(0.8761061946902655);transform-origin:100% 0;">1</div>
<div class="t" style="left:838.40px;top:488.42px;font-size:11.3px;transform:scaleX(0.8761061946902655);transform-origin:0 0;">N</div>
<div class="hl" style="left:4px;top:517.7579999999999px;width:1014px;height:1px;background:#dadada"></div>
<div class="hl" style="left:4px;top:517.7579999999999px;width:11px;height:1px;background:#c6c6c6"></div>
<div class="t" style="right:931.60px;top:505.01px;font-size:11.3px;transform:scaleX(0.8761061946902655);transform-origin:100% 0;">213</div>
<div class="t" style="left:97.40px;top:505.01px;font-size:11.3px;transform:scaleX(0.8761061946902655);transform-origin:0 0;">EXENTO VALE GASOLINA</div>
<div class="t" style="right:572.60px;top:505.01px;font-size:11.3px;transform:scaleX(0.8761061946902655);transform-origin:100% 0;">500.00</div>
<div class="t" style="left:456.40px;top:505.01px;font-size:11.3px;transform:scaleX(0.8761061946902655);transform-origin:0 0;">Obligación Empresa</div>
<div class="t" style="left:548.40px;top:505.01px;font-size:11.3px;transform:scaleX(0.8761061946902655);transform-origin:0 0;">S</div>
<div class="t" style="right:342.60px;top:505.01px;font-size:11.3px;transform:scaleX(0.8761061946902655);transform-origin:100% 0;">1</div>
<div class="t" style="left:838.40px;top:505.01px;font-size:11.3px;transform:scaleX(0.8761061946902655);transform-origin:0 0;">N</div>
<div class="hl" style="left:4px;top:534.342px;width:1014px;height:1px;background:#dadada"></div>
<div class="hl" style="left:4px;top:534.342px;width:11px;height:1px;background:#c6c6c6"></div>
<div class="t" style="right:931.60px;top:521.59px;font-size:11.3px;transform:scaleX(0.8761061946902655);transform-origin:100% 0;">214</div>
<div class="t" style="left:97.40px;top:521.59px;font-size:11.3px;transform:scaleX(0.8761061946902655);transform-origin:0 0;">EXENTO VALE DE DESPENSA</div>
<div class="t" style="right:572.60px;top:521.59px;font-size:11.3px;transform:scaleX(0.8761061946902655);transform-origin:100% 0;">2,106.64</div>
<div class="t" style="left:456.40px;top:521.59px;font-size:11.3px;transform:scaleX(0.8761061946902655);transform-origin:0 0;">Obligación Empresa</div>
<div class="t" style="left:548.40px;top:521.59px;font-size:11.3px;transform:scaleX(0.8761061946902655);transform-origin:0 0;">S</div>
<div class="t" style="right:342.60px;top:521.59px;font-size:11.3px;transform:scaleX(0.8761061946902655);transform-origin:100% 0;">1</div>
<div class="t" style="left:838.40px;top:521.59px;font-size:11.3px;transform:scaleX(0.8761061946902655);transform-origin:0 0;">N</div>
<div class="hl" style="left:4px;top:550.9259999999999px;width:1014px;height:1px;background:#dadada"></div>
<div class="hl" style="left:4px;top:550.9259999999999px;width:11px;height:1px;background:#c6c6c6"></div>
<div class="t" style="right:931.60px;top:538.18px;font-size:11.3px;transform:scaleX(0.8761061946902655);transform-origin:100% 0;">300</div>
<div class="t" style="left:97.40px;top:538.18px;font-size:11.3px;transform:scaleX(0.8761061946902655);transform-origin:0 0;">IMSS PATRONAL</div>
<div class="t" style="right:572.60px;top:538.18px;font-size:11.3px;transform:scaleX(0.8761061946902655);transform-origin:100% 0;">789.97</div>
<div class="t" style="left:456.40px;top:538.18px;font-size:11.3px;transform:scaleX(0.8761061946902655);transform-origin:0 0;">Obligación Empresa</div>
<div class="t" style="left:548.40px;top:538.18px;font-size:11.3px;transform:scaleX(0.8761061946902655);transform-origin:0 0;">S</div>
<div class="t" style="right:342.60px;top:538.18px;font-size:11.3px;transform:scaleX(0.8761061946902655);transform-origin:100% 0;">1</div>
<div class="t" style="left:838.40px;top:538.18px;font-size:11.3px;transform:scaleX(0.8761061946902655);transform-origin:0 0;">N</div>
<div class="hl" style="left:4px;top:567.51px;width:1014px;height:1px;background:#dadada"></div>
<div class="hl" style="left:4px;top:567.51px;width:11px;height:1px;background:#c6c6c6"></div>
<div class="t" style="right:931.60px;top:554.76px;font-size:11.3px;transform:scaleX(0.8761061946902655);transform-origin:100% 0;">301</div>
<div class="t" style="left:97.40px;top:554.76px;font-size:11.3px;transform:scaleX(0.8761061946902655);transform-origin:0 0;">INFONAVIT 5%</div>
<div class="t" style="right:572.60px;top:554.76px;font-size:11.3px;transform:scaleX(0.8761061946902655);transform-origin:100% 0;">604.50</div>
<div class="t" style="left:456.40px;top:554.76px;font-size:11.3px;transform:scaleX(0.8761061946902655);transform-origin:0 0;">Obligación Empresa</div>
<div class="t" style="left:548.40px;top:554.76px;font-size:11.3px;transform:scaleX(0.8761061946902655);transform-origin:0 0;">S</div>
<div class="t" style="right:342.60px;top:554.76px;font-size:11.3px;transform:scaleX(0.8761061946902655);transform-origin:100% 0;">1</div>
<div class="t" style="left:838.40px;top:554.76px;font-size:11.3px;transform:scaleX(0.8761061946902655);transform-origin:0 0;">N</div>
<div class="hl" style="left:4px;top:584.0939999999999px;width:1014px;height:1px;background:#dadada"></div>
<div class="hl" style="left:4px;top:584.0939999999999px;width:11px;height:1px;background:#c6c6c6"></div>
<div class="t" style="right:931.60px;top:571.34px;font-size:11.3px;transform:scaleX(0.8761061946902655);transform-origin:100% 0;">302</div>
<div class="t" style="left:97.40px;top:571.34px;font-size:11.3px;transform:scaleX(0.8761061946902655);transform-origin:0 0;">RETIRO, CESANTIA Y VEJEZ</div>
<div class="t" style="right:572.60px;top:571.34px;font-size:11.3px;transform:scaleX(0.8761061946902655);transform-origin:100% 0;">622.64</div>
<div class="t" style="left:456.40px;top:571.34px;font-size:11.3px;transform:scaleX(0.8761061946902655);transform-origin:0 0;">Obligación Empresa</div>
<div class="t" style="left:548.40px;top:571.34px;font-size:11.3px;transform:scaleX(0.8761061946902655);transform-origin:0 0;">S</div>
<div class="t" style="right:342.60px;top:571.34px;font-size:11.3px;transform:scaleX(0.8761061946902655);transform-origin:100% 0;">1</div>
<div class="t" style="left:838.40px;top:571.34px;font-size:11.3px;transform:scaleX(0.8761061946902655);transform-origin:0 0;">N</div>
<div class="hl" style="left:4px;top:600.678px;width:1014px;height:1px;background:#dadada"></div>
<div class="hl" style="left:4px;top:600.678px;width:11px;height:1px;background:#c6c6c6"></div>
<div class="t" style="right:931.60px;top:587.93px;font-size:11.3px;transform:scaleX(0.8761061946902655);transform-origin:100% 0;">305</div>
<div class="t" style="left:97.40px;top:587.93px;font-size:11.3px;transform:scaleX(0.8761061946902655);transform-origin:0 0;">IMPUESTO ESTATAL 1.80% Y 15 %</div>
<div class="t" style="right:572.60px;top:587.93px;font-size:11.3px;transform:scaleX(0.8761061946902655);transform-origin:100% 0;">623.77</div>
<div class="t" style="left:456.40px;top:587.93px;font-size:11.3px;transform:scaleX(0.8761061946902655);transform-origin:0 0;">Obligación Empresa</div>
<div class="t" style="left:548.40px;top:587.93px;font-size:11.3px;transform:scaleX(0.8761061946902655);transform-origin:0 0;">S</div>
<div class="t" style="right:342.60px;top:587.93px;font-size:11.3px;transform:scaleX(0.8761061946902655);transform-origin:100% 0;">1</div>
<div class="t" style="left:838.40px;top:587.93px;font-size:11.3px;transform:scaleX(0.8761061946902655);transform-origin:0 0;">N</div>
<div class="hl" style="left:4px;top:617.262px;width:1014px;height:1px;background:#dadada"></div>
<div class="hl" style="left:4px;top:617.262px;width:11px;height:1px;background:#c6c6c6"></div>
<div class="t" style="right:931.60px;top:604.51px;font-size:11.3px;transform:scaleX(0.8761061946902655);transform-origin:100% 0;">306</div>
<div class="t" style="left:97.40px;top:604.51px;font-size:11.3px;transform:scaleX(0.8761061946902655);transform-origin:0 0;">IMSS OBRERO EYM</div>
<div class="t" style="right:572.60px;top:604.51px;font-size:11.3px;transform:scaleX(0.8761061946902655);transform-origin:100% 0;">118.13</div>
<div class="t" style="left:456.40px;top:604.51px;font-size:11.3px;transform:scaleX(0.8761061946902655);transform-origin:0 0;">Obligación Empresa</div>
<div class="t" style="left:548.40px;top:604.51px;font-size:11.3px;transform:scaleX(0.8761061946902655);transform-origin:0 0;">S</div>
<div class="t" style="right:342.60px;top:604.51px;font-size:11.3px;transform:scaleX(0.8761061946902655);transform-origin:100% 0;">1</div>
<div class="t" style="left:838.40px;top:604.51px;font-size:11.3px;transform:scaleX(0.8761061946902655);transform-origin:0 0;">N</div>
<div class="hl" style="left:4px;top:633.846px;width:1014px;height:1px;background:#dadada"></div>
<div class="hl" style="left:4px;top:633.846px;width:11px;height:1px;background:#c6c6c6"></div>
<div class="t" style="right:931.60px;top:621.10px;font-size:11.3px;transform:scaleX(0.8761061946902655);transform-origin:100% 0;">307</div>
<div class="t" style="left:97.40px;top:621.10px;font-size:11.3px;transform:scaleX(0.8761061946902655);transform-origin:0 0;">IMSS OBRERO IV</div>
<div class="t" style="right:572.60px;top:621.10px;font-size:11.3px;transform:scaleX(0.8761061946902655);transform-origin:100% 0;">75.56</div>
<div class="t" style="left:456.40px;top:621.10px;font-size:11.3px;transform:scaleX(0.8761061946902655);transform-origin:0 0;">Obligación Empresa</div>
<div class="t" style="left:548.40px;top:621.10px;font-size:11.3px;transform:scaleX(0.8761061946902655);transform-origin:0 0;">S</div>
<div class="t" style="right:342.60px;top:621.10px;font-size:11.3px;transform:scaleX(0.8761061946902655);transform-origin:100% 0;">1</div>
<div class="t" style="left:838.40px;top:621.10px;font-size:11.3px;transform:scaleX(0.8761061946902655);transform-origin:0 0;">N</div>
<div class="hl" style="left:4px;top:650.43px;width:1014px;height:1px;background:#dadada"></div>
<div class="hl" style="left:4px;top:650.43px;width:11px;height:1px;background:#c6c6c6"></div>
<div class="t" style="right:931.60px;top:637.68px;font-size:11.3px;transform:scaleX(0.8761061946902655);transform-origin:100% 0;">308</div>
<div class="t" style="left:97.40px;top:637.68px;font-size:11.3px;transform:scaleX(0.8761061946902655);transform-origin:0 0;">IMSS OBRERO CV</div>
<div class="t" style="right:572.60px;top:637.68px;font-size:11.3px;transform:scaleX(0.8761061946902655);transform-origin:100% 0;">136.01</div>
<div class="t" style="left:456.40px;top:637.68px;font-size:11.3px;transform:scaleX(0.8761061946902655);transform-origin:0 0;">Obligación Empresa</div>
<div class="t" style="left:548.40px;top:637.68px;font-size:11.3px;transform:scaleX(0.8761061946902655);transform-origin:0 0;">S</div>
<div class="t" style="right:342.60px;top:637.68px;font-size:11.3px;transform:scaleX(0.8761061946902655);transform-origin:100% 0;">1</div>
<div class="t" style="left:838.40px;top:637.68px;font-size:11.3px;transform:scaleX(0.8761061946902655);transform-origin:0 0;">N</div>
<div class="hl" style="left:4px;top:667.0139999999999px;width:1014px;height:1px;background:#dadada"></div>
<div class="hl" style="left:4px;top:667.0139999999999px;width:11px;height:1px;background:#c6c6c6"></div>
<div class="t" style="right:931.60px;top:654.26px;font-size:11.3px;transform:scaleX(0.8761061946902655);transform-origin:100% 0;">309</div>
<div class="t" style="left:97.40px;top:654.26px;font-size:11.3px;transform:scaleX(0.8761061946902655);transform-origin:0 0;">ISN</div>
<div class="t" style="right:572.60px;top:654.26px;font-size:11.3px;transform:scaleX(0.8761061946902655);transform-origin:100% 0;">57.35</div>
<div class="t" style="left:456.40px;top:654.26px;font-size:11.3px;transform:scaleX(0.8761061946902655);transform-origin:0 0;">Obligación Empresa</div>
<div class="t" style="left:548.40px;top:654.26px;font-size:11.3px;transform:scaleX(0.8761061946902655);transform-origin:0 0;">S</div>
<div class="t" style="right:342.60px;top:654.26px;font-size:11.3px;transform:scaleX(0.8761061946902655);transform-origin:100% 0;">1</div>
<div class="t" style="left:838.40px;top:654.26px;font-size:11.3px;transform:scaleX(0.8761061946902655);transform-origin:0 0;">N</div>
<div class="hl" style="left:4px;top:683.598px;width:1014px;height:1px;background:#dadada"></div>
<div class="hl" style="left:4px;top:683.598px;width:11px;height:1px;background:#c6c6c6"></div>
<div class="t" style="right:931.60px;top:670.85px;font-size:11.3px;transform:scaleX(0.8761061946902655);transform-origin:100% 0;">999</div>
<div class="t" style="left:97.40px;top:670.85px;font-size:11.3px;transform:scaleX(0.8761061946902655);transform-origin:0 0;">Neto</div>
<div class="t" style="right:572.60px;top:670.85px;font-size:11.3px;transform:scaleX(0.8761061946902655);transform-origin:100% 0;">0.00</div>
<div class="t" style="left:456.40px;top:670.85px;font-size:11.3px;transform:scaleX(0.8761061946902655);transform-origin:0 0;">Resultados</div>
<div class="t" style="left:548.40px;top:670.85px;font-size:11.3px;transform:scaleX(0.8761061946902655);transform-origin:0 0;">S</div>
<div class="t" style="right:342.60px;top:670.85px;font-size:11.3px;transform:scaleX(0.8761061946902655);transform-origin:100% 0;">1</div>
<div class="t" style="left:838.40px;top:670.85px;font-size:11.3px;transform:scaleX(0.8761061946902655);transform-origin:0 0;">N</div>
<div class="a" style="left:15px;top:237.0px;width:1002px;height:15px;border:1px dotted #5a5a5a"></div>
</body></html>
